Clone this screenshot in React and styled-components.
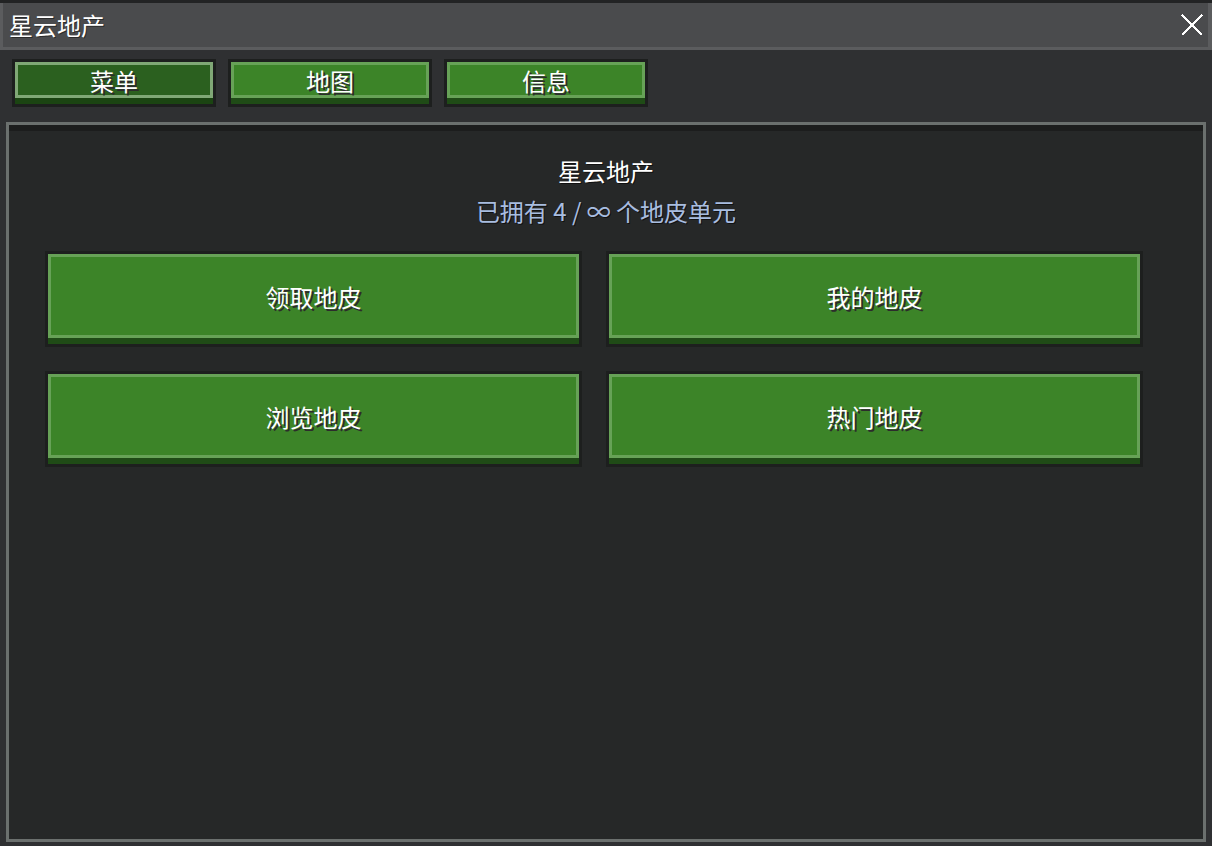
import React from "react";
import styled, { createGlobalStyle } from "styled-components";

const GlobalStyle = createGlobalStyle`
  html, body {
    margin: 0;
    padding: 0;
    background: #2f3032;
  }
  body {
    font-family: "Noto Sans CJK SC", "Noto Sans", sans-serif;
    color: #fff;
  }
`;

const Window = styled.div`
  height: 846px;
  width: 1212px;
  display: flex;
  flex-direction: column;
  background: #2f3032;
  border-top: 3px solid #222324;
  box-sizing: border-box;
`;

const TitleBar = styled.div`
  height: 47px;
  box-sizing: border-box;
  display: flex;
  align-items: center;
  justify-content: space-between;
  background: #4a4b4d;
  border-left: 3px solid #5b5c5e;
  border-right: 4px solid #5b5c5e;
  border-bottom: 3px solid #5b5c5e;
  padding: 0 5px 0 6px;
`;

const TitleText = styled.span`
  font-size: 24px;
  line-height: 1;
  color: #fff;
  text-shadow: 1px 1px 0 #2b2b2b;
`;

const CloseButton = styled.button`
  background: none;
  border: none;
  padding: 0;
  width: 22px;
  height: 22px;
  display: flex;
  cursor: pointer;
`;

const TabRow = styled.div`
  display: flex;
  gap: 12px;
  padding: 9px 12px 0;
`;

const Bevel = styled.button`
  box-sizing: border-box;
  width: ${(p) => p.$width}px;
  padding: 0 0 6px;
  border: 3px solid #1d1f1e;
  background: ${(p) => (p.$active ? "#1b4412" : "#1f4b16")};
  cursor: pointer;
  font-family: inherit;
`;

const Face = styled.div`
  box-sizing: border-box;
  height: ${(p) => p.$height}px;
  display: flex;
  align-items: center;
  justify-content: center;
  background: ${(p) => (p.$active ? "#2b601f" : "#3c8428")};
  border: 3px solid ${(p) => (p.$active ? "#80a876" : "#67a257")};
  color: #fff;
  font-size: 24px;
  text-shadow: 2px 2px 0 #2c2c2c;
`;

const Panel = styled.div`
  flex: 1;
  margin: 15px 6px 4px;
  border: 3px solid #6b706e;
  background: #262828;
  display: flex;
  flex-direction: column;
`;

const PanelShade = styled.div`
  height: 6px;
  background: #1c1d1d;
`;

const Heading = styled.div`
  text-align: center;
  padding-top: 26px;
`;

const HeadingTitle = styled.div`
  font-size: 24px;
  line-height: 28px;
  color: #fff;
  text-shadow: 1px 1px 0 #111;
`;

const HeadingSub = styled.div`
  margin-top: 12px;
  font-size: 24px;
  line-height: 28px;
  color: #a8bde0;
  text-shadow: 1px 1px 0 #111;
`;

const ActionGrid = styled.div`
  display: grid;
  grid-template-columns: 537px 537px;
  column-gap: 24px;
  row-gap: 24px;
  padding: 26px 0 0 36px;
`;

const tabs = [
  { label: "菜单", active: true },
  { label: "地图" },
  { label: "信息" },
];

const actions = ["领取地皮", "我的地皮", "浏览地皮", "热门地皮"];

const CloseIcon = () => (
  <svg width="22" height="22" viewBox="0 0 22 22" shapeRendering="crispEdges">
    <path d="M1 1 L21 21 M21 1 L1 21" stroke="#fff" strokeWidth="2.2" fill="none" />
  </svg>
);

export default function App() {
  return (
    <>
      <GlobalStyle />
      <Window>
        <TitleBar>
          <TitleText>星云地产</TitleText>
          <CloseButton aria-label="关闭">
            <CloseIcon />
          </CloseButton>
        </TitleBar>
        <TabRow>
          {tabs.map((t) => (
            <Bevel key={t.label} $width={204} $active={t.active}>
              <Face $height={36} $active={t.active}>
                {t.label}
              </Face>
            </Bevel>
          ))}
        </TabRow>
        <Panel>
          <PanelShade />
          <Heading>
            <HeadingTitle>星云地产</HeadingTitle>
            <HeadingSub>已拥有 4 / ∞ 个地皮单元</HeadingSub>
          </Heading>
          <ActionGrid>
            {actions.map((a) => (
              <Bevel key={a} $width={537}>
                <Face $height={84}>{a}</Face>
              </Bevel>
            ))}
          </ActionGrid>
        </Panel>
      </Window>
    </>
  );
}
